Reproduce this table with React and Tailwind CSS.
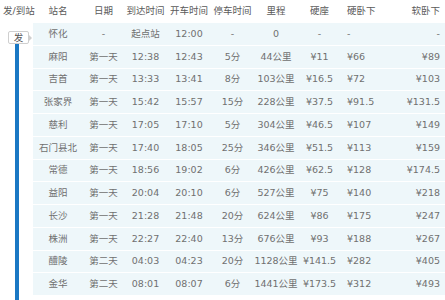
import React from "react";

const stops = [
  ["怀化", "-", "起点站", "12:00", "-", "0", "-", "-", "-"],
  ["麻阳", "第一天", "12:38", "12:43", "5分", "44公里", "¥11", "¥66", "¥89"],
  ["吉首", "第一天", "13:33", "13:41", "8分", "103公里", "¥16.5", "¥72", "¥103"],
  ["张家界", "第一天", "15:42", "15:57", "15分", "228公里", "¥37.5", "¥91.5", "¥131.5"],
  ["慈利", "第一天", "17:05", "17:10", "5分", "304公里", "¥46.5", "¥107", "¥149"],
  ["石门县北", "第一天", "17:40", "18:05", "25分", "346公里", "¥51.5", "¥113", "¥159"],
  ["常德", "第一天", "18:56", "19:02", "6分", "426公里", "¥62.5", "¥128", "¥174.5"],
  ["益阳", "第一天", "20:04", "20:10", "6分", "527公里", "¥75", "¥140", "¥218"],
  ["长沙", "第一天", "21:28", "21:48", "20分", "624公里", "¥86", "¥175", "¥247"],
  ["株洲", "第一天", "22:27", "22:40", "13分", "676公里", "¥93", "¥188", "¥267"],
  ["醴陵", "第二天", "04:03", "04:23", "20分", "1128公里", "¥141.5", "¥282", "¥405"],
  ["金华", "第二天", "08:01", "08:07", "6分", "1441公里", "¥173.5", "¥312", "¥493"],
];

// widths of the nine data columns, the last two are aligned differently
const cols = [
  "w-[50px] text-center",
  "w-[41px] text-center",
  "w-[43px] text-center",
  "w-[44px] text-center",
  "w-[43px] text-center",
  "w-[44px] text-center",
  "w-[43px] text-center",
  "w-[49px] text-left pl-[6px]",
  "w-[55px] text-right pr-[5px]",
];

const headers = ["站名", "日期", "到达时间", "开车时间", "停车时间", "里程", "硬座", "硬卧下", "软卧下"];

export default function App() {
  return (
    <div className="w-[445px] h-[300px] overflow-hidden bg-white text-[9.5px] font-['DejaVu_Sans','Noto_Sans_CJK_SC',sans-serif] text-[#707070]">
      {/* header */}
      <div className="flex h-[23px] items-center text-[#5a5a5a]">
        <div className="w-[33px] shrink-0 whitespace-nowrap pl-[3px]">发/到站</div>
        {headers.map((h, i) => (
          <div key={h} className={`${cols[i]} whitespace-nowrap`}>
            {h}
          </div>
        ))}
      </div>

      <div className="flex">
        {/* left rail */}
        <div className="relative w-[33px] shrink-0">
          <div className="absolute left-[15px] top-[20px] w-[4px] h-[260px] bg-[#1a78c4]" />
          <div className="absolute left-[8px] top-[8px] flex items-center">
            <div className="h-[13px] w-[21px] flex items-center justify-center bg-white border border-[#cfcfcf] rounded-[2px] text-[#555] leading-none">
              发
            </div>
            <div className="w-0 h-0 border-y-[4px] border-y-transparent border-l-[4px] border-l-[#cfcfcf] -ml-[1px]" />
          </div>
        </div>

        {/* rows */}
        <div className="flex-1 bg-[#eef7fa]">
          {stops.map((row) => (
            <div key={row[0]} className="flex h-[22.75px] items-center border-b border-white whitespace-nowrap">
              {row.map((cell, i) => (
                <div key={i} className={cols[i]}>
                  {cell}
                </div>
              ))}
            </div>
          ))}
        </div>
      </div>
    </div>
  );
}
